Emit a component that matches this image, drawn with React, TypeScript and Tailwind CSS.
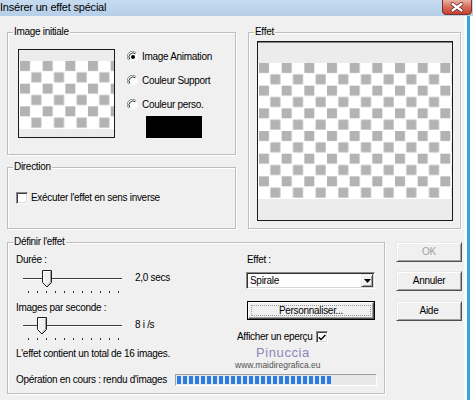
import React from "react";

const F = "font-['Liberation_Sans',Arial,sans-serif]";

function Group({ label, className, children }: { label: string; className: string; children?: React.ReactNode }) {
  return (
    <div className={"relative border border-[#bdbdbd] shadow-[inset_1px_1px_0_#ffffff,1px_1px_0_#ffffff] " + className}>
      <span className="absolute left-[5px] top-[-7px] bg-[#f0f0f0] px-[1px] leading-[12px] whitespace-nowrap">{label}</span>
      {children}
    </div>
  );
}

function Checker({ w, h, id }: { w: number; h: number; id: string }) {
  return (
    <svg width={w} height={h} className="block shrink-0">
      <defs>
        <pattern id={id} x="1" y="0" width="22.67" height="22.67" patternUnits="userSpaceOnUse">
          <rect width="22.67" height="22.67" fill="#ffffff" />
          <rect x="0" y="0" width="10" height="10" fill="#b3b3b3" />
          <rect x="11.33" y="11.33" width="10" height="10" fill="#b3b3b3" />
        </pattern>
      </defs>
      <rect width={w} height={h} fill={`url(#${id})`} />
    </svg>
  );
}

function Radio({ checked, label }: { checked?: boolean; label: string }) {
  return (
    <div className="flex items-center h-[16px]">
      <svg width="12" height="12" viewBox="0 0 12 12" className="shrink-0">
        <circle cx="6" cy="6" r="5" fill="#ffffff" />
        <path d="M1.8 9.2 A5 5 0 0 1 9.2 1.8" fill="none" stroke="#8a8a8a" strokeWidth="1" />
        <path d="M2.8 8.4 A4 4 0 0 1 8.4 2.8" fill="none" stroke="#303030" strokeWidth="1" />
        <path d="M9.2 1.8 A5 5 0 0 1 1.8 9.2" fill="none" stroke="#f4f4f4" strokeWidth="1" />
        {checked && <circle cx="6" cy="6" r="2" fill="#000000" />}
      </svg>
      <span className="ml-[3px] whitespace-nowrap">{label}</span>
    </div>
  );
}

function Check({ checked, className }: { checked?: boolean; className?: string }) {
  return (
    <div
      className={
        "w-[12px] h-[12px] shrink-0 bg-white border border-t-[#8a8a8a] border-l-[#8a8a8a] border-r-white border-b-white shadow-[inset_1px_1px_0_#404040,inset_-1px_-1px_0_#d8d8d8] flex items-center justify-center " +
        (className || "")
      }
    >
      {checked && (
        <svg width="8" height="7" viewBox="0 0 8 7">
          <path d="M0.8 3.2 L3 5.6 L7.4 1" fill="none" stroke="#000" strokeWidth="1.4" />
        </svg>
      )}
    </div>
  );
}

function Slider({ thumbClass }: { thumbClass: string }) {
  const ticks = Array.from({ length: 11 });
  return (
    <div className="relative w-[104px] h-[24px] shrink-0">
      <div className="absolute left-[2px] top-[8px] w-[99px] h-[1px] bg-[#3c3c3c] shadow-[0_1px_0_#ffffff]" />
      <div className="absolute left-[7px] top-[21px] flex gap-[8px]">
        {ticks.map((_, i) => (
          <div key={i} className="w-[1px] h-[2px] bg-[#303030]" />
        ))}
      </div>
      <svg width="11" height="18" viewBox="0 0 11 18" className={"absolute top-0 " + thumbClass}>
        <path d="M0.5 0.5 H9.5 V12.5 L5 17 L0.5 12.5 Z" fill="#f0f0f0" stroke="#1e1e1e" />
        <path d="M1.5 12.2 V1.5 H8.5" fill="none" stroke="#ffffff" />
        <path d="M8.5 1.5 V12.2 L5 15.6" fill="none" stroke="#a0a0a0" />
      </svg>
    </div>
  );
}

function Btn({ children, disabled, className }: { children: React.ReactNode; disabled?: boolean; className?: string }) {
  return (
    <div
      className={
        "w-[66px] h-[20px] flex items-center justify-center bg-[#f0f0f0] border border-t-[#e8e8e8] border-l-[#e8e8e8] border-r-[#505050] border-b-[#505050] shadow-[inset_1px_1px_0_#ffffff,inset_-1px_-1px_0_#a0a0a0] " +
        (disabled ? "text-[#a0a0a0] " : "") +
        (className || "")
      }
    >
      {children}
    </div>
  );
}

function TitleBar() {
  return (
    <div className="h-[16px] shrink-0 flex bg-[linear-gradient(#c6dbf0,#b6cee8)]">
      <span className="text-[11px] leading-[15px] tracking-[-0.2px] whitespace-nowrap">Insérer un effet spécial</span>
      <div className="ml-auto mr-[1px]">
        <svg width="30" height="15" viewBox="0 0 30 15" className="block">
          <defs>
            <linearGradient id="closeg" x1="0" y1="0" x2="0" y2="1">
              <stop offset="0" stopColor="#eab1a5" />
              <stop offset="0.45" stopColor="#d8705f" />
              <stop offset="1" stopColor="#c33d2b" />
            </linearGradient>
          </defs>
          <path d="M0.5 0 V11 Q0.5 14.5 4 14.5 H26 Q29.5 14.5 29.5 11 V0" fill="url(#closeg)" stroke="#7a3026" />
          <path d="M10.5 4 L19.5 10.5 M19.5 4 L10.5 10.5" stroke="#5a1e18" strokeWidth="3.6" strokeLinecap="round" />
          <path d="M10.5 4 L19.5 10.5 M19.5 4 L10.5 10.5" stroke="#ffffff" strokeWidth="2.2" strokeLinecap="round" />
        </svg>
      </div>
    </div>
  );
}

export default function App() {
  const segs = Array.from({ length: 26 });
  return (
    <div className={`${F} relative w-[473px] h-[400px] overflow-hidden bg-[#f0f0f0] text-[10px] leading-[12px] tracking-[-0.3px] text-black flex flex-col`}>
      <TitleBar />
      <div className="flex flex-1">
        <div className="w-[464px] pl-[7px] pt-[16px] flex flex-col">
          <div className="flex gap-[12px]">
            <div className="flex flex-col gap-[12px] w-[229px]">
              <Group label="Image initiale" className="h-[123px] flex pl-[10px] pt-[16px]">
                <div className="w-[97px] h-[89px] shrink-0 border border-[#1a1a1a] bg-[#ececec] flex flex-col">
                  <div className="h-[11px]" />
                  <Checker w={95} h={68} id="chk1" />
                </div>
                <div className="ml-[12px] flex flex-col gap-[8px]">
                  <Radio checked label="Image Animation" />
                  <Radio label="Couleur Support" />
                  <Radio label="Couleur perso." />
                  <div className="ml-[19px] mt-[-5px] w-[56px] h-[22px] bg-black" />
                </div>
              </Group>
              <Group label="Direction" className="h-[62px] pl-[8px] pt-[24px]">
                <div className="flex items-center">
                  <Check />
                  <span className="ml-[3px] whitespace-nowrap">Exécuter l'effet en sens inverse</span>
                </div>
              </Group>
            </div>
            <Group label="Effet" className="w-[213px] h-[197px] pl-[8px] pt-[8px]">
              <div className="w-[196px] h-[180px] border border-[#1a1a1a] shadow-[inset_0_1px_0_#808080] bg-[#ececec] flex flex-col">
                <div className="h-[21px]" />
                <Checker w={194} h={136} id="chk2" />
              </div>
            </Group>
          </div>
          <div className="flex mt-[13px]">
            <Group label="Définir l'effet" className="w-[378px] h-[152px] pl-[8px] pt-[11px] flex flex-col">
              <div className="flex">
                <div className="w-[219px] flex flex-col">
                  <span>Durée :</span>
                  <div className="flex mt-[4px] ml-[5px]">
                    <Slider thumbClass="left-[21px]" />
                    <span className="ml-[10px] mt-[2px] whitespace-nowrap">2,0 secs</span>
                  </div>
                  <span className="mt-[8px]">Images par seconde :</span>
                  <div className="flex mt-[3px] ml-[5px]">
                    <Slider thumbClass="left-[16px]" />
                    <span className="ml-[10px] mt-[2px] whitespace-nowrap">8 i /s</span>
                  </div>
                  <span className="mt-[7px] whitespace-nowrap">L'effet contient un total de 16 images.</span>
                </div>
                <div className="flex flex-col">
                  <span className="ml-[12px]">Effet :</span>
                  <div className="ml-[11px] mt-[6px] w-[129px] h-[17px] bg-white border border-t-[#8a8a8a] border-l-[#8a8a8a] border-r-white border-b-white shadow-[inset_1px_1px_0_#303030,inset_-1px_-1px_0_#d8d8d8] flex items-center">
                    <span className="pl-[3px] flex-1">Spirale</span>
                    <div className="w-[12px] h-[13px] mr-[1px] bg-[#f0f0f0] border border-t-[#e8e8e8] border-l-[#e8e8e8] border-r-[#404040] border-b-[#404040] shadow-[inset_1px_1px_0_#ffffff,inset_-1px_-1px_0_#a0a0a0] flex items-center justify-center">
                      <svg width="7" height="4" viewBox="0 0 7 4">
                        <path d="M0 0 H7 L3.5 4 Z" fill="#000" />
                      </svg>
                    </div>
                  </div>
                  <div className="ml-[12px] mt-[12px] w-[128px] h-[19px] border border-black">
                    <div className="w-full h-full bg-[#f0f0f0] border border-t-white border-l-white border-r-[#505050] border-b-[#505050] shadow-[inset_-1px_-1px_0_#a0a0a0] p-[2px]">
                      <div className="w-full h-full border border-dotted border-[#9a9a9a] flex items-center justify-center whitespace-nowrap">Personnaliser...</div>
                    </div>
                  </div>
                  <div className="flex items-center h-[12px] mt-[11px] ml-[2px]">
                    <span className="whitespace-nowrap">Afficher un eperçu</span>
                    <Check checked className="ml-[3px]" />
                  </div>
                  <span className="ml-[21px] mt-[3px] h-[14px] text-[13px] leading-[14px] tracking-[0.6px] text-[#8a88b6] whitespace-nowrap">Pinuccia</span>
                  <span className="mt-[1px] h-[9px] text-[8.5px] leading-[9px] tracking-[0px] text-[#505050] whitespace-nowrap">www.maidiregrafica.eu</span>
                </div>
              </div>
              <div className="flex items-center mt-[4px]">
                <span className="w-[159px] shrink-0 whitespace-nowrap">Opération en cours : rendu d'images</span>
                <div className="w-[202px] h-[12px] border border-t-[#a0a0a0] border-l-[#a0a0a0] border-r-white border-b-white bg-[#e8e8e8] flex gap-[2px] pl-[1px] py-[1px]">
                  {segs.map((_, i) => (
                    <div key={i} className="w-[4px] h-full bg-[#2a7de6]" />
                  ))}
                </div>
              </div>
            </Group>
            <div className="ml-[11px] flex flex-col">
              <Btn disabled>OK</Btn>
              <Btn className="mt-[9px]">Annuler</Btn>
              <Btn className="mt-[10px]">Aide</Btn>
            </div>
          </div>
        </div>
        <div className="w-[3px] bg-[#f8f8f8]" />
        <div className="w-[3px] bg-[#3ba3de]" />
        <div className="w-[3px] bg-white" />
      </div>
    </div>
  );
}
